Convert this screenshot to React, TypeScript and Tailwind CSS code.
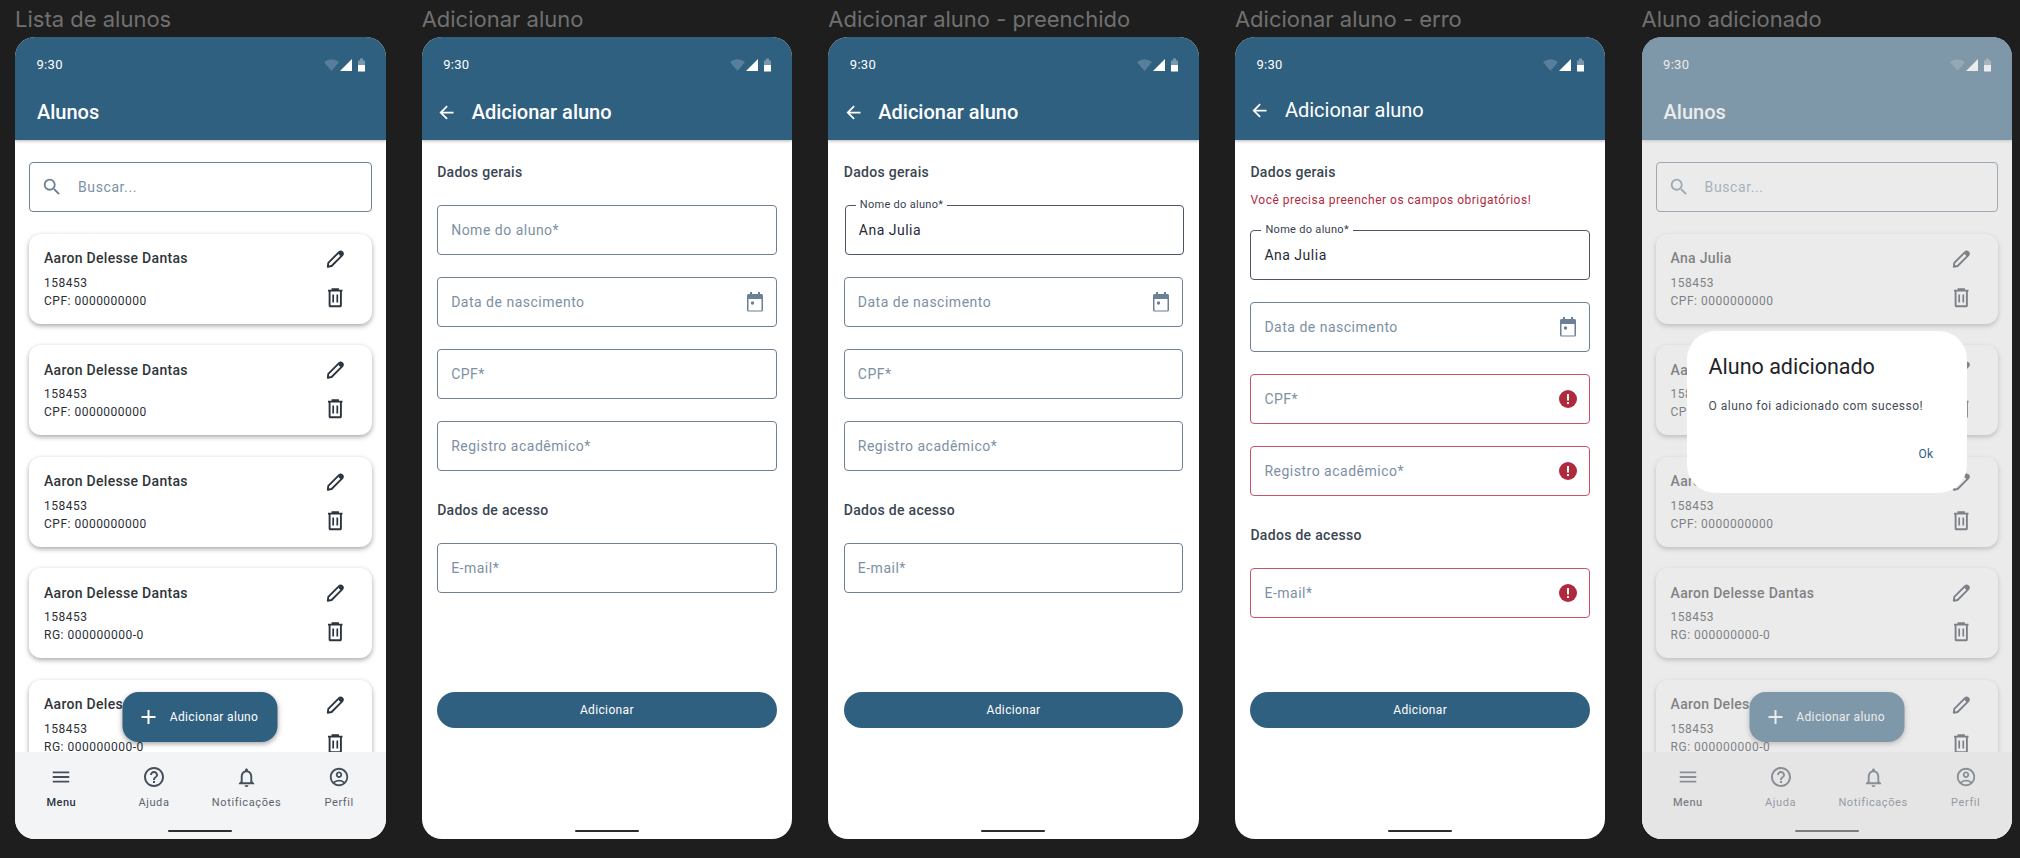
import type { ReactNode } from "react";
import {
  MdAdd,
  MdArrowBack,
  MdMenu,
  MdOutlineAccountCircle,
  MdOutlineHelpOutline,
  MdOutlineNotifications,
  MdSearch,
} from "react-icons/md";

function StatusIcons() {
  return (
    <svg width="42" height="14" viewBox="0 0 42 14" className="mr-[-1px]">
      <path d="M0 4 Q7.5 -1.5 15 4 L7.5 13z" fill="#fff" opacity="0.2" />
      <path d="M28 1v12H16z" fill="#fff" />
      <path d="M34 2.5h2V0.5h3v2h2V7h-7z" fill="#fff" opacity="0.35" />
      <path d="M34 7h7v6.5h-7z" fill="#fff" />
    </svg>
  );
}

function PencilIcon() {
  return (
    <svg width="24" height="24" viewBox="0 0 24 24" fill="none" stroke="currentColor" strokeWidth="1.9" strokeLinejoin="round">
      <path d="M4.8 20.8 L5.3 16.8 L16 6.1 Q17.6 4.7 19.2 6.1 Q20.6 7.7 19.2 9.3 L8.6 20z" />
      <path d="M16.4 6.6 L18.8 9" strokeWidth="3.2" />
    </svg>
  );
}

function TrashIcon() {
  return (
    <svg width="24" height="24" viewBox="0 0 24 24" fill="none" stroke="currentColor" strokeWidth="1.9">
      <path d="M5 4.6h14.5M9.5 4.4V3.2h5.5v1.2" />
      <path d="M6.6 5v14.4a.8.8 0 0 0 .8.8h9.7a.8.8 0 0 0 .8-.8V5" />
      <path d="M10.2 8.5v8M14.3 8.5v8" strokeWidth="1.7" />
    </svg>
  );
}

function Header({ title, back, titleUp }: { title: string; back?: boolean; titleUp?: boolean }) {
  return (
    <div className="relative z-10 h-[103px] shrink-0 bg-[#2f6080] text-white shadow-[0_1px_3px_rgba(0,0,0,0.3)]">
      <div className="flex h-[56px] items-center justify-between pl-[21.5px] pr-[21px]">
        <span className="text-[13px] tracking-[0.3px]">9:30</span>
        <StatusIcons />
      </div>
      <div className={titleUp ? "flex h-[34px] items-center" : "flex h-[38px] items-center"}>
        {back ? (
          <>
            <MdArrowBack size={21} className="ml-[14.5px] mr-[14.5px]" />
            <span className={titleUp ? "text-[20px]" : "text-[20px] font-[470]"}>{title}</span>
          </>
        ) : (
          <span className="ml-[22px] text-[20px] font-[470]">{title}</span>
        )}
      </div>
    </div>
  );
}

function StudentCard({ name, doc }: { name: string; doc: string }) {
  return (
    <div className="flex h-[90px] shrink-0 justify-between rounded-[12px] bg-white pl-[15px] pr-[25px] pt-[12px] shadow-[0_2px_5px_rgba(0,0,0,0.35)]">
      <div className="pt-[2.5px]">
        <div className="text-[14px] font-[480] leading-[20px] tracking-[0.3px] text-[#30353b]">{name}</div>
        <div className="mt-[5.5px] text-[12px] leading-[18px] tracking-[0.5px] text-[#2a2f36]">158453</div>
        <div className="text-[12px] leading-[18px] tracking-[0.5px] text-[#2a2f36]">{doc}</div>
      </div>
      <div className="flex flex-col gap-[16px] text-[#2b3540]">
        <PencilIcon />
        <TrashIcon />
      </div>
    </div>
  );
}

const navItems = [
  { label: "Menu", icon: <MdMenu size={22} /> },
  { label: "Ajuda", icon: <MdOutlineHelpOutline size={24} /> },
  { label: "Notificações", icon: <MdOutlineNotifications size={23} /> },
  { label: "Perfil", icon: <MdOutlineAccountCircle size={22} /> },
];

function BottomNav() {
  return (
    <div className="relative h-[87px] shrink-0 bg-[#f3f4f6]">
      <div className="grid grid-cols-4 pt-[13px]">
        {navItems.map((item, i) => (
          <div key={item.label} className="flex flex-col items-center gap-[2px]">
            <span className="flex h-[24px] items-center text-[#46505c]">{item.icon}</span>
            <span
              className={
                i === 0
                  ? "text-[11px] font-medium leading-[24px] tracking-[0.5px] text-[#2b3440]"
                  : "text-[11px] leading-[24px] tracking-[0.6px] text-[#5b6470]"
              }
            >
              {item.label}
            </span>
          </div>
        ))}
      </div>
      <div className="absolute bottom-[7px] left-[153px] h-[2px] w-[64px] rounded-full bg-[#2d2d2d]" />
    </div>
  );
}

function ListScreen({ first }: { first: string }) {
  return (
    <>
      <Header title="Alunos" />
      <div className="flex min-h-0 flex-1 flex-col gap-[21.5px] overflow-hidden px-[14px] pt-[22px]">
        <div className="flex h-[50px] shrink-0 items-center rounded-[4px] border border-[#6f8095] pl-[11px] text-[#6f8095]">
          <MdSearch size={22} />
          <span className="ml-[15px] text-[14px] tracking-[0.6px] text-[#7d8fa3]">Buscar...</span>
        </div>
        <StudentCard name={first} doc="CPF: 0000000000" />
        <StudentCard name="Aaron Delesse Dantas" doc="CPF: 0000000000" />
        <StudentCard name="Aaron Delesse Dantas" doc="CPF: 0000000000" />
        <StudentCard name="Aaron Delesse Dantas" doc="RG: 000000000-0" />
        <StudentCard name="Aaron Delesse Dantas" doc="RG: 000000000-0" />
      </div>
      <BottomNav />
      <div className="absolute bottom-[97px] left-1/2 flex h-[50px] w-[155px] -translate-x-1/2 items-center rounded-[16px] bg-[#2f6080] pl-[14px] text-white shadow-[0_2px_5px_rgba(0,0,0,0.35)]">
        <MdAdd size={24} />
        <span className="ml-[9px] text-[12px] font-[450] tracking-[0.35px]">Adicionar aluno</span>
      </div>
    </>
  );
}

function CalendarIcon() {
  return (
    <svg width="24" height="24" viewBox="0 0 24 24" fill="#6b7f95" className="translate-y-[0.5px]">
      <path
        fillRule="evenodd"
        d="M7 1.5h2v2h6v-2h2v2h1.5a1.5 1.5 0 0 1 1.5 1.5v14.5a1.5 1.5 0 0 1-1.5 1.5h-13A1.5 1.5 0 0 1 4 19.5V5a1.5 1.5 0 0 1 1.5-1.5H7v-2zM5.5 8.5v11.5h13V8.5h-13z"
      />
      <circle cx="9.5" cy="12.5" r="1.7" />
    </svg>
  );
}

function ErrorIcon() {
  return (
    <svg width="24" height="24" viewBox="0 0 24 24">
      <circle cx="12" cy="12" r="9" fill="#b02a3e" />
      <path d="M11 7h2v6.5h-2zM11 15h2v2h-2z" fill="#fff" />
    </svg>
  );
}

function Field({ label, value, error, icon, nudge }: { label: string; value?: string; error?: boolean; icon?: ReactNode; nudge?: boolean }) {
  const border = error ? "border-[#c9546a]" : value ? "border-[#4b5563]" : "border-[#6f8095]";
  return (
    <div
      className={`relative flex h-[50px] shrink-0 items-center justify-between rounded-[4px] border pl-[13px] pr-[9px] ${border} ${
        nudge ? "ml-[1px] mr-[-1px]" : ""
      }`}
    >
      {value && (
        <span className="absolute left-[10px] top-[-8px] bg-white px-[4px] text-[11px] leading-[14px] tracking-[0.3px] text-[#374151]">
          {label}
        </span>
      )}
      <span className={value ? "text-[14px] tracking-[0.5px] text-[#1f2937]" : "text-[14px] tracking-[0.5px] text-[#7d8fa3]"}>
        {value ?? label}
      </span>
      {error ? <ErrorIcon /> : icon}
    </div>
  );
}

function SectionTitle({ children }: { children: ReactNode }) {
  return <div className="text-[14px] font-[480] leading-[20px] tracking-[0.3px] text-[#3a4552]">{children}</div>;
}

function FormScreen({ filled, error }: { filled?: boolean; error?: boolean }) {
  return (
    <>
      <Header title="Adicionar aluno" back titleUp={error} />
      <div className="flex min-h-0 flex-1 flex-col px-[15.5px] pb-[111.5px] pt-[22px]">
        <SectionTitle>Dados gerais</SectionTitle>
        {error ? (
          <div className="mb-[21px] mt-[9px] text-[12px] leading-[18px] tracking-[0.5px] text-[#b02a3e]">
            Você precisa preencher os campos obrigatórios!
          </div>
        ) : (
          <div className="h-[23px]" />
        )}
        <div className="flex flex-col gap-[22px]">
          <Field label="Nome do aluno*" value={filled ? "Ana Julia" : undefined} nudge={filled && !error} />
          <Field label="Data de nascimento" icon={<CalendarIcon />} />
          <Field label="CPF*" error={error} />
          <Field label="Registro acadêmico*" error={error} />
        </div>
        <div className="mt-[29px]">
          <SectionTitle>Dados de acesso</SectionTitle>
        </div>
        <div className="mt-[23px]">
          <Field label="E-mail*" error={error} />
        </div>
        <button className="mt-auto h-[36px] shrink-0 rounded-full bg-[#2f6080] text-[12px] font-[450] tracking-[0.35px] text-white">
          Adicionar
        </button>
      </div>
      <div className="absolute bottom-[7px] left-[153px] h-[2px] w-[64px] rounded-full bg-[#2d2d2d]" />
    </>
  );
}

function Frame({ title, children }: { title: string; children: ReactNode }) {
  return (
    <div className="w-[370.5px] shrink-0">
      <div className="flex h-[37px] items-center whitespace-nowrap pt-[2px] font-['Inter',sans-serif] text-[22px] text-[#707070]">{title}</div>
      <div className="relative flex h-[802px] flex-col overflow-hidden rounded-[20px] bg-white">{children}</div>
    </div>
  );
}

export default function App() {
  return (
    <div className="flex h-[858px] w-[2020px] gap-[36.15px] overflow-hidden bg-[#1e1e1e] pl-[15px] font-['Roboto',sans-serif]">
      <Frame title="Lista de alunos">
        <ListScreen first="Aaron Delesse Dantas" />
      </Frame>
      <Frame title="Adicionar aluno">
        <FormScreen />
      </Frame>
      <Frame title="Adicionar aluno - preenchido">
        <FormScreen filled />
      </Frame>
      <Frame title="Adicionar aluno - erro">
        <FormScreen filled error />
      </Frame>
      <Frame title="Aluno adicionado">
        <ListScreen first="Ana Julia" />
        {/* scrim */}
        <div className="absolute inset-0 z-20 bg-[#d5d5d5]/[0.48]" />
        <div className="absolute left-[45px] top-[294px] z-30 flex h-[162px] w-[280px] flex-col rounded-[28px] bg-white pl-[22px] pr-[33px]">
          <div className="mt-[22px] text-[21.5px] leading-[28px] text-[#1f2328]">Aluno adicionado</div>
          <div className="mt-[16px] text-[12px] leading-[18px] tracking-[0.5px] text-[#444b55]">O aluno foi adicionado com sucesso!</div>
          <div className="mt-[30px] text-right text-[12px] font-[450] leading-[18px] tracking-[0.4px] text-[#2f6080]">Ok</div>
        </div>
      </Frame>
    </div>
  );
}
